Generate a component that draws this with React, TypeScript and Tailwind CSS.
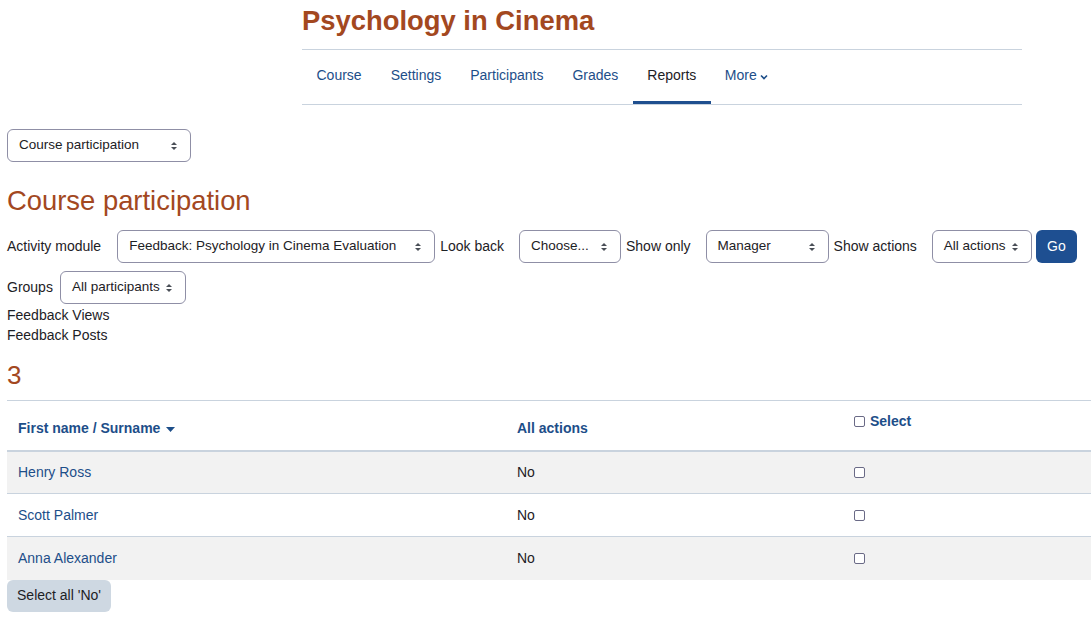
import React from 'react';

const brown = 'text-[#a3481f]';

const Caret: React.FC = () => (
  <svg width="8" height="10" viewBox="0 0 8 10" className="shrink-0">
    <path d="M4 1 L7 4 H1 Z" fill="#4a4f57" />
    <path d="M4 9 L7 6 H1 Z" fill="#4a4f57" />
  </svg>
);

interface SelectBoxProps {
  label: string;
  width: string;
}

const SelectBox: React.FC<SelectBoxProps> = ({ label, width }) => (
  <div
    className={`${width} h-[33px] shrink-0 flex items-center justify-between pl-[11px] pr-[12px] gap-[4px] border border-[#8f8fa6] rounded-[6px] bg-white text-[13.5px] text-[#1d2125]`}
  >
    <span className="whitespace-nowrap">{label}</span>
    <Caret />
  </div>
);

const Checkbox: React.FC = () => (
  <span className="inline-block w-[11px] h-[11px] border border-[#6a6a86] rounded-[2px] bg-white" />
);

const navItems = ['Course', 'Settings', 'Participants', 'Grades', 'Reports'];

const rows = [
  { name: 'Henry Ross', shade: true },
  { name: 'Scott Palmer', shade: false },
  { name: 'Anna Alexander', shade: true },
];

export default function App() {
  return (
    <div className="w-[1091px] h-[618px] overflow-hidden bg-white font-['Liberation_Sans',Arial,sans-serif] text-[14px] text-[#1d2125]">
      {/* page header */}
      <div className="ml-[302px] w-[720px]">
        <h1 className={`pt-[5px] h-[49px] text-[27.4px] font-bold leading-[32px] ${brown}`}>Psychology in Cinema</h1>
        <div className="border-t border-b border-[#c9d3de] h-[56px] flex items-stretch">
          {navItems.map(item => (
            <div
              key={item}
              className={`flex items-center border-b-[3px] px-[14.5px] ${
                item === 'Reports' ? 'border-[#1f4f8f] text-[#1d2125]' : 'border-transparent text-[#1d4e89]'
              }`}
            >
              <span>{item}</span>
            </div>
          ))}
          <div className="px-[14px] flex items-center gap-[3px] text-[#1d4e89] border-b-[3px] border-transparent">
            <span>More</span>
            <svg width="8" height="6" viewBox="0 0 8 6" className="mt-[2px]">
              <path d="M1 1.5 L4 4.5 L7 1.5" stroke="#1d4e89" strokeWidth="1.6" fill="none" />
            </svg>
          </div>
        </div>
      </div>

      <div className="px-[7px]">
        <div className="mt-[24px]">
          <SelectBox label="Course participation" width="w-[184px]" />
        </div>

        <h2 className={`mt-[22px] text-[27.4px] leading-[34px] ${brown}`}>Course participation</h2>

        <div className="mt-[12px] flex items-center">
          <span className="mr-[16px]">Activity module</span>
          <SelectBox label="Feedback: Psychology in Cinema Evaluation" width="w-[318px]" />
          <span className="ml-[5px] mr-[15px]">Look back</span>
          <SelectBox label="Choose..." width="w-[102px]" />
          <span className="ml-[5px] mr-[15px]">Show only</span>
          <SelectBox label="Manager" width="w-[123px]" />
          <span className="ml-[5px] mr-[15px]">Show actions</span>
          <SelectBox label="All actions" width="w-[100px]" />
          <button className="ml-[4px] h-[33px] w-[41px] rounded-[6px] bg-[#1e4f91] text-white text-[14px]">Go</button>
        </div>

        <div className="mt-[8px] flex items-center">
          <span className="mr-[7px]">Groups</span>
          <SelectBox label="All participants" width="w-[126px]" />
        </div>

        <div className="mt-[1px] leading-[20px]">
          <div>Feedback Views</div>
          <div>Feedback Posts</div>
        </div>

        <div className={`mt-[15px] text-[26px] leading-[30px] ${brown}`}>3</div>

        <table className="mt-[10px] w-[1084px] border-collapse">
          <thead>
            <tr className="border-t border-[#c9d3de] border-b-2 border-b-[#c9d3de] h-[50px]">
              <th className="text-left font-bold text-[#1d4e89] px-[11px] pt-[6px] w-[510px]">
                <span className="inline-flex items-center gap-[6px]">
                  First name / Surname
                  <svg width="9" height="5" viewBox="0 0 9 5" className="mt-[2px]">
                    <path d="M0 0 H9 L4.5 5 Z" fill="#1d4e89" />
                  </svg>
                </span>
              </th>
              <th className="text-left font-bold text-[#1d4e89] px-[0px] pt-[6px] w-[337px]">All actions</th>
              <th className="text-left font-bold text-[#1d4e89] align-top pt-[10px]">
                <span className="inline-flex items-center gap-[5px]">
                  <Checkbox />
                  Select
                </span>
              </th>
            </tr>
          </thead>
          <tbody>
            {rows.map(r => (
              <tr
                key={r.name}
                className={`h-[43px] border-b border-[#c9d3de] last:border-b-0 ${r.shade ? 'bg-[#f2f2f2]' : 'bg-white'}`}
              >
                <td className="px-[11px] text-[#1d4e89]">{r.name}</td>
                <td>No</td>
                <td>
                  <span className="flex items-center">
                    <Checkbox />
                  </span>
                </td>
              </tr>
            ))}
          </tbody>
        </table>

        <button className="h-[32px] w-[104px] rounded-[6px] bg-[#ced8e2] text-[14px] text-[#1d2125] whitespace-nowrap">Select all 'No'</button>
      </div>
    </div>
  );
}
